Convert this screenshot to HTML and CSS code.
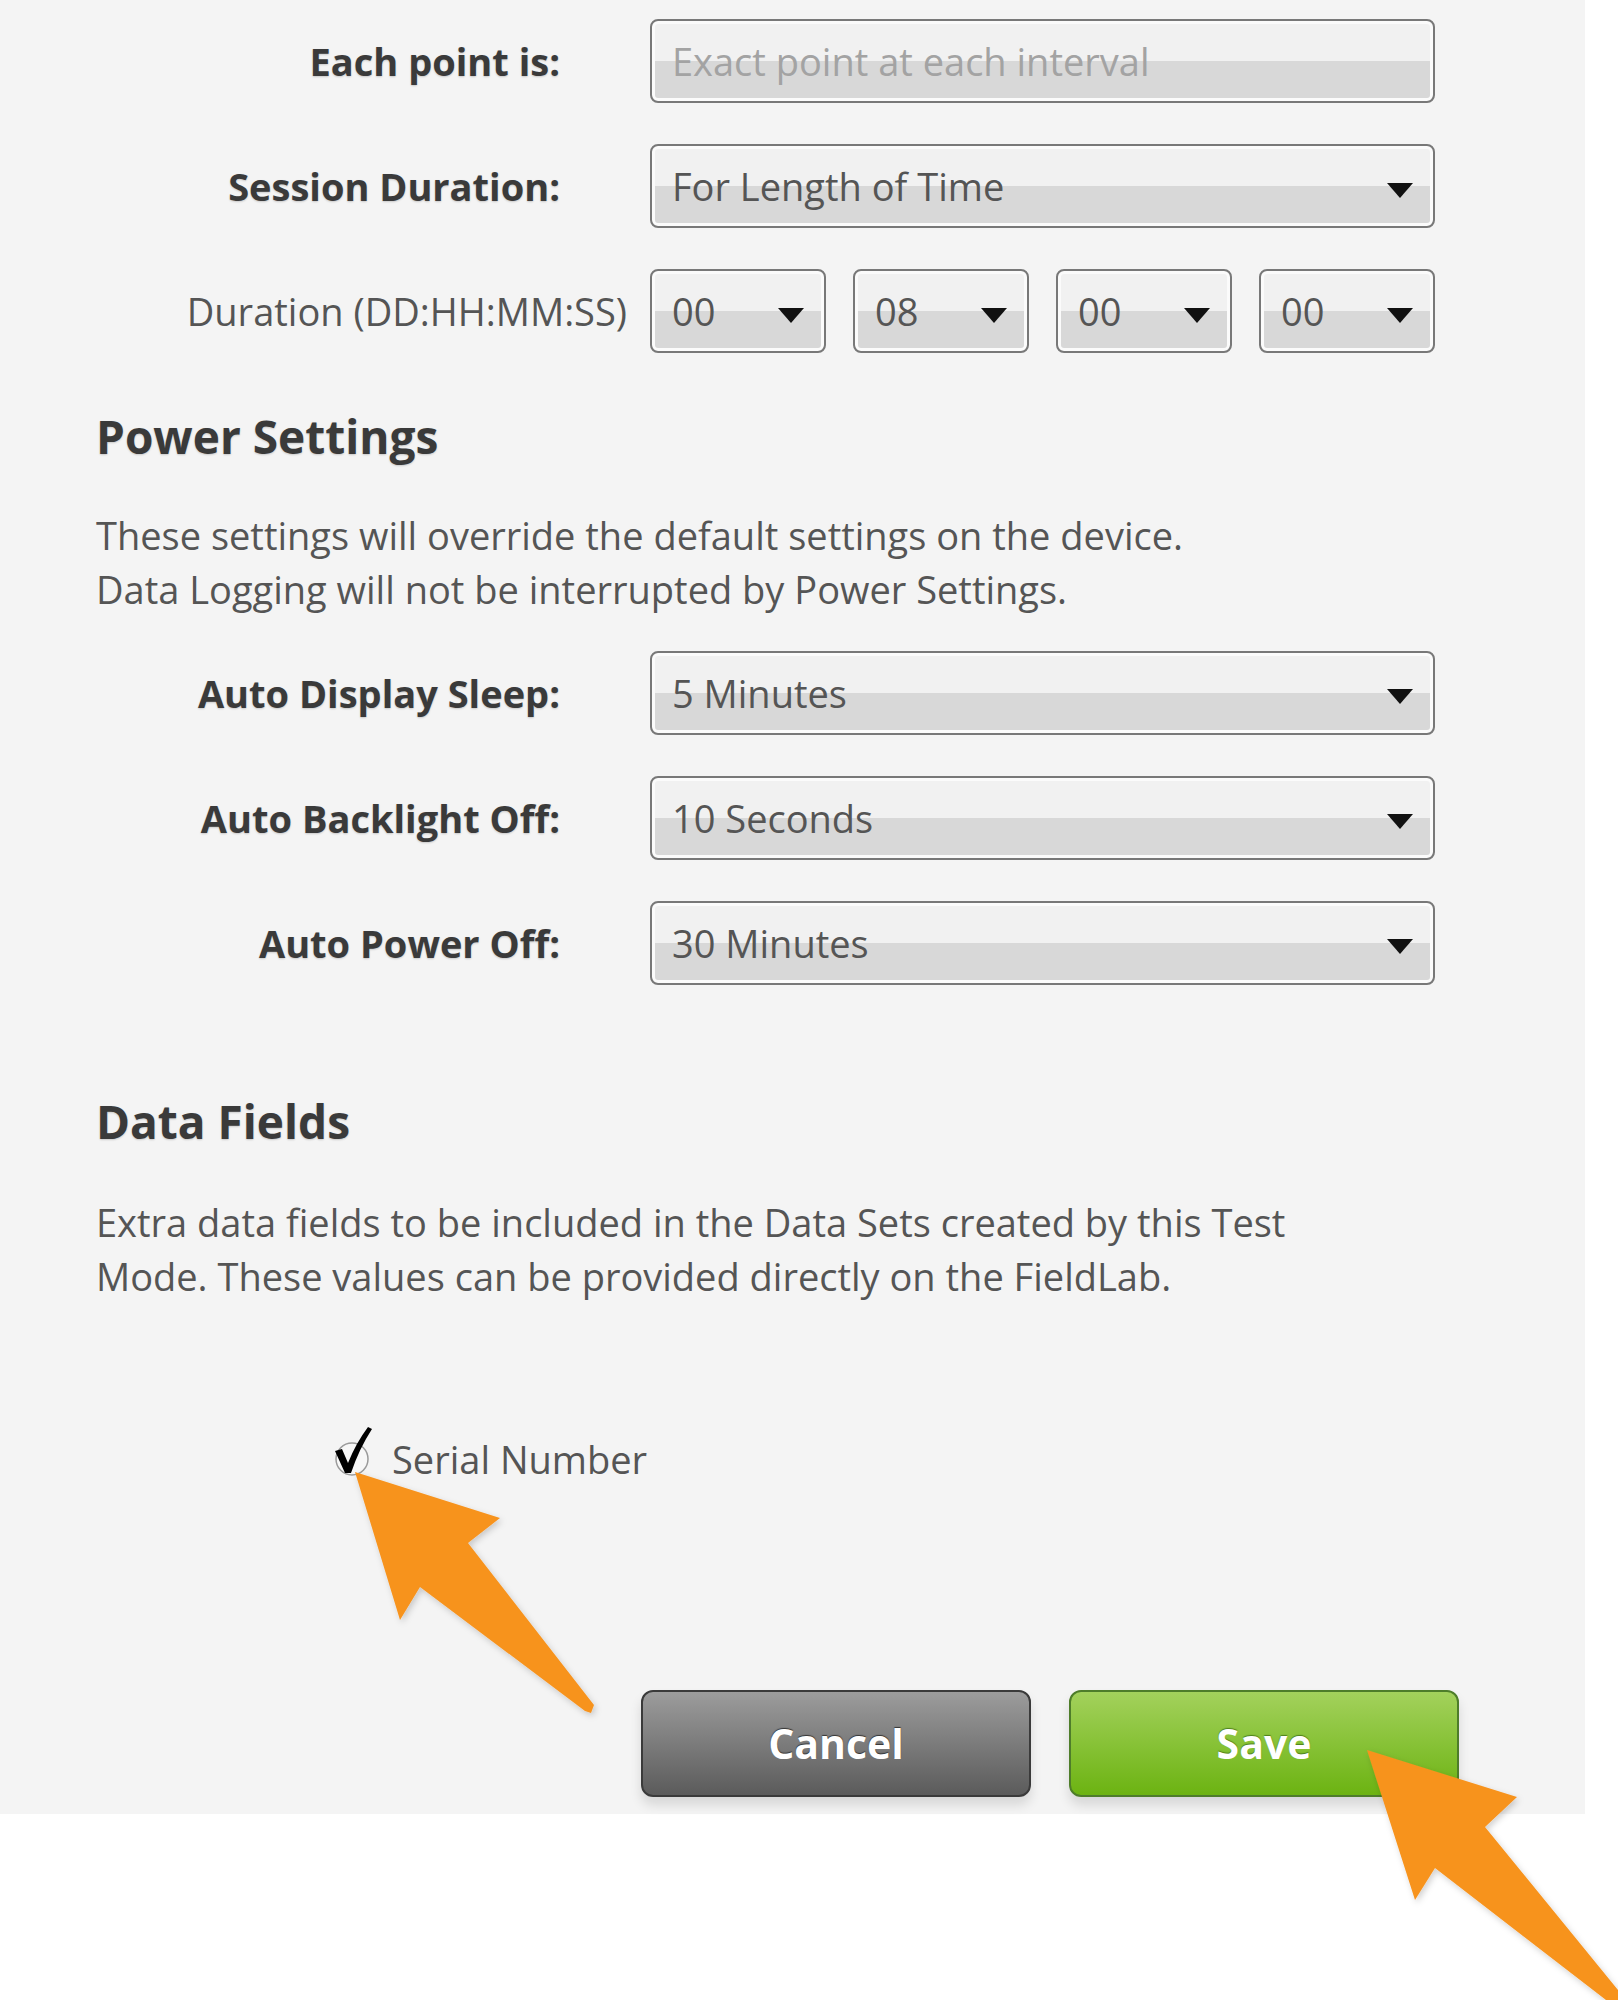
FILE: index.html
```html
<!DOCTYPE html>
<html lang="en">
<head>
  <meta charset="UTF-8">
  <meta name="viewport" content="width=device-width, initial-scale=1.0">
  <title>Test Mode Settings</title>
  <link rel="stylesheet" href="styles.css">
</head>
<body>
  <div class="panel">
    <div class="row">
      <div class="label">Each point is:</div>
      <div class="select disabled">Exact point at each interval</div>
    </div>
    <div class="row">
      <div class="label">Session Duration:</div>
      <div class="select">For Length of Time<span class="caret"></span></div>
    </div>
    <div class="row">
      <div class="label plain">Duration (DD:HH:MM:SS)</div>
      <div class="duration">
        <div class="select small">00<span class="caret"></span></div>
        <div class="select small">08<span class="caret"></span></div>
        <div class="select small">00<span class="caret"></span></div>
        <div class="select small">00<span class="caret"></span></div>
      </div>
    </div>

    <h2 class="section-title power">Power Settings</h2>
    <p class="note">These settings will override the default settings on the device.<br>Data Logging will not be interrupted by Power Settings.</p>

    <div class="power-fields">
      <div class="row">
        <div class="label">Auto Display Sleep:</div>
        <div class="select">5 Minutes<span class="caret"></span></div>
      </div>
      <div class="row">
        <div class="label">Auto Backlight Off:</div>
        <div class="select">10 Seconds<span class="caret"></span></div>
      </div>
      <div class="row">
        <div class="label">Auto Power Off:</div>
        <div class="select">30 Minutes<span class="caret"></span></div>
      </div>
    </div>

    <h2 class="section-title data">Data Fields</h2>
    <p class="note data-note">Extra data fields to be included in the Data Sets created by this Test<br>Mode. These values can be provided directly on the FieldLab.</p>

    <label class="check-row">
      <svg class="checkbox" width="40" height="52" viewBox="0 0 40 52">
        <circle cx="20" cy="34" r="16" fill="#f7f7f7" stroke="#9a9a9a" stroke-width="1.5"/>
        <path d="M3 26 L10 24 L16 38 Q24 18 36 2 L40 4 Q27 24 19 48 L13 48 Z" fill="#000"/>
      </svg>
      <span>Serial Number</span>
    </label>

    <div class="actions">
      <button class="btn cancel">Cancel</button>
      <button class="btn save">Save</button>
    </div>
  </div>

  <svg class="overlay" width="1618" height="2000" viewBox="0 0 1618 2000">
    <defs>
      <filter id="soft" x="-10%" y="-10%" width="130%" height="130%">
        <feDropShadow dx="2" dy="3" stdDeviation="3" flood-color="#000" flood-opacity="0.18"/>
      </filter>
    </defs>
    <polygon class="pointer" filter="url(#soft)" points="355,1472 500,1518 468,1543 594,1705 591,1713 585,1711 420,1587 400,1620"/>
    <polygon class="pointer" filter="url(#soft)" points="1367,1750 1517,1797 1485,1827 1618,1990 1618,2000 1606,2000 1435,1868 1415,1900"/>
  </svg>
</body>
</html>
```

FILE: styles.css
```css
body {
  margin: 0;
  background-color: #fff;
  font-family: "Open Sans", "Noto Sans", sans-serif;
  position: relative;
  min-height: 2000px;
}
.panel {
  width: 1585px;
  box-sizing: border-box;
  background-color: #f4f4f4;
  display: flex;
  flex-direction: column;
  padding: 19px 0 17px;
}
.row {
  display: flex;
  align-items: center;
  height: 84px;
}
.row + .row {
  margin-top: 41px;
}
.label {
  flex: 0 0 560px;
  margin-right: 90px;
  text-align: right;
  font-size: 38px;
  font-weight: 700;
  color: #3a3a3a;
  text-shadow: 0 1px 2px rgba(0, 0, 0, 0.18);
}
.label.plain {
  flex-basis: 627px;
  margin-right: 23px;
  font-weight: 400;
  color: #555;
  text-shadow: none;
}
.select {
  flex: 0 0 785px;
  height: 84px;
  box-sizing: border-box;
  display: flex;
  align-items: center;
  justify-content: space-between;
  padding: 0 20px 0 20px;
  border: 2px solid #787878;
  border-radius: 8px;
  background: linear-gradient(#f1f1f1 50%, #d8d8d8 50%);
  box-shadow: inset 0 0 0 3px #fbfbfb;
  font-size: 38px;
  color: #555;
}
.select.disabled {
  color: #a3a3a3;
}
.duration {
  display: flex;
  gap: 27px;
}
.select.small {
  flex-basis: 176px;
  width: 176px;
}
.caret {
  width: 0;
  height: 0;
  border-left: 13px solid transparent;
  border-right: 13px solid transparent;
  border-top: 15px solid #111;
  margin-top: 8px;
}
.section-title {
  margin: 57px 0 0 96px;
  font-size: 46px;
  font-weight: 700;
  line-height: 1.15;
  color: #3a3a3a;
  text-shadow: 0 1px 2px rgba(0, 0, 0, 0.18);
}
.section-title.data {
  margin-top: 110px;
}
.note {
  margin: 45px 0 0 96px;
  font-size: 38px;
  line-height: 54px;
  color: #555;
}
.data-note {
  margin-top: 47px;
}
.power-fields {
  margin-top: 35px;
}
.check-row {
  display: flex;
  align-items: flex-start;
  height: 54px;
  margin-top: 129px;
  padding-left: 332px;
  font-size: 38px;
  line-height: 54px;
  color: #555;
}
.checkbox {
  margin-top: -7px;
  margin-right: 20px;
}
.actions {
  display: flex;
  justify-content: flex-end;
  gap: 38px;
  margin-top: 204px;
  padding-right: 126px;
}
.btn {
  width: 390px;
  height: 107px;
  box-sizing: border-box;
  border-radius: 12px;
  font-family: "Open Sans", "Noto Sans", sans-serif;
  font-size: 41px;
  font-weight: 700;
  color: #fff;
  cursor: pointer;
  box-shadow: 0 8px 12px rgba(0, 0, 0, 0.12);
}
.cancel {
  border: 2px solid #3a3a3a;
  background: linear-gradient(#9c9c9c, #5b5b5b);
  text-shadow: 0 -1px 1px #333;
}
.save {
  border: 2px solid #4e7d2a;
  background: linear-gradient(#a3d15c, #6cb312);
  text-shadow: 0 -1px 1px #4c7f1c;
}
.overlay {
  position: absolute;
  left: 0;
  top: 0;
  pointer-events: none;
}
.pointer {
  fill: #f7931e;
}
```
